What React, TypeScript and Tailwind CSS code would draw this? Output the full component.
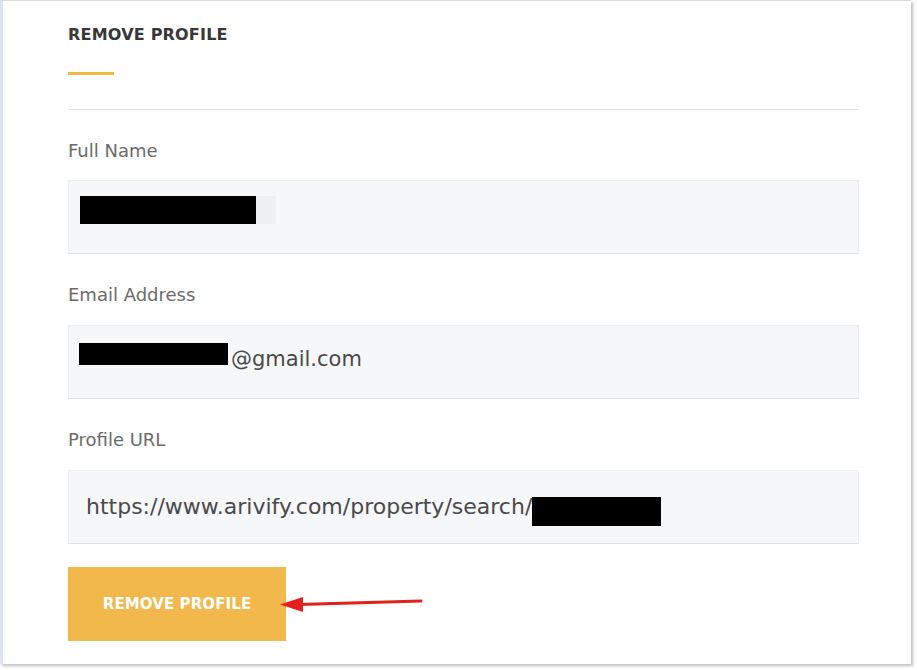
import React from 'react';

const font = { fontFamily: '"DejaVu Sans", "Liberation Sans", sans-serif' };

const Label = ({ children, top }: { children: React.ReactNode; top: string }) => (
    <div className={`${top} h-[24px] text-[18px] leading-[24px] text-[#6b6b6b]`}>{children}</div>
);

export default function App() {
    return (
        <div className="w-[917px] h-[670px] bg-white overflow-hidden" style={font}>
            <div className="relative w-[911px] h-[664px] bg-white border-t border-[#dcdcdc] border-l-[3px] border-l-[#dde3ef] shadow-[2px_2px_3px_rgba(0,0,0,0.25)] pl-[65px] pt-[25px]">
                <div className="w-[791px] flex flex-col">
                    {/* header */}
                    <h2 className="h-[18px] text-[16px] leading-[18px] font-semibold text-[#383838] tracking-[0.2px]">REMOVE PROFILE</h2>
                    <div className="mt-[28px] w-[46px] h-[3px] bg-[#f2b844]" />
                    <div className="mt-[34px] h-px bg-[#e4e4e4]" />

                    {/* full name */}
                    <Label top="mt-[29px]">Full Name</Label>
                    <div className="mt-[17px] h-[74px] bg-[#f6f7f9] border border-[#eceef1] border-b-[#dfe1e5] pl-[11px] pt-[15px]">
                        <div className="flex">
                            <div className="w-[176px] h-[28px] bg-black" />
                            <div className="w-[20px] h-[28px] bg-[#eef0f2]" />
                        </div>
                    </div>

                    {/* email */}
                    <Label top="mt-[29px]">Email Address</Label>
                    <div className="mt-[18px] h-[74px] bg-[#f6f7f9] border border-[#eceef1] border-b-[#dfe1e5] pl-[10px] pt-[17px]">
                        <div className="flex items-start">
                            <div className="w-[149px] h-[22px] bg-black" />
                            <span className="ml-[3px] pt-[5px] text-[21px] leading-[22px] text-[#4a4a4a]">@gmail.com</span>
                        </div>
                    </div>

                    {/* profile url */}
                    <Label top="mt-[29px]">Profile URL</Label>
                    <div className="mt-[18px] h-[74px] bg-[#f6f7f9] border border-[#eceef1] border-b-[#dfe1e5] px-[17px] flex items-center">
                        <span className="text-[22px] leading-[30px] text-[#4a4a4a]">https://www.arivify.com/property/search/</span>
                        <div className="mt-[9px] w-[129px] h-[29px] bg-black" />
                    </div>

                    {/* action */}
                    <button className="mt-[23px] w-[218px] h-[74px] bg-[#f2b84b] text-white text-[15px] font-bold tracking-[0.1px]">
                        REMOVE PROFILE
                    </button>
                </div>

                {/* annotation arrow */}
                <svg className="absolute left-[270px] top-[590px] pointer-events-none" width="160" height="26" viewBox="270 590 160 26">
                    <line x1="418" y1="600" x2="296" y2="603.5" stroke="#e3201b" strokeWidth="3" strokeLinecap="round" />
                    <polygon points="277,603.5 300,596 300,611" fill="#e3201b" />
                </svg>
            </div>
        </div>
    );
}
